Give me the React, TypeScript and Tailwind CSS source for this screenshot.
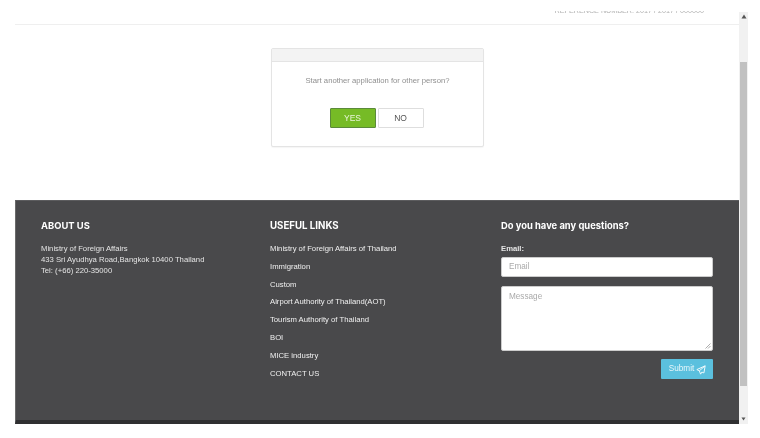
const links = [
  "Ministry of Foreign Affairs of Thailand",
  "Immigration",
  "Custom",
  "Airport Authority of Thailand(AOT)",
  "Tourism Authority of Thailand",
  "BOI",
  "MICE industry",
  "CONTACT US",
];

function Scrollbar() {
  return (
    <div className="w-[9px] mt-[12px] h-[412px] bg-[#f1f1f1] flex flex-col items-center shrink-0">
      <div className="h-[50px] w-full flex flex-col items-center">
        <svg width="6" height="5" viewBox="0 0 6 5" className="mt-[2px]"><path d="M3 0.5 L5.5 4.5 H0.5 Z" fill="#555" /></svg>
      </div>
      <div className="h-[324px] w-[7px] bg-[#c1c1c1]" />
      <div className="flex-1 w-full flex flex-col items-center justify-end pb-[3px]">
        <svg width="5" height="4" viewBox="0 0 6 5"><path d="M3 4.5 L5.5 0.5 H0.5 Z" fill="#555" /></svg>
      </div>
    </div>
  );
}

export default function App() {
  return (
    <div className="w-[760px] h-[438px] bg-white flex overflow-hidden blur-[0.35px] font-['Liberation_Sans',Arial,sans-serif]">
      <div className="w-[15px] shrink-0" />
      <div className="w-[724px] shrink-0 flex flex-col h-[424px]">
        <div className="h-[25px] shrink-0 border-b border-[#efefef] flex justify-end pr-[35px]">
          <div className="mt-[11px] h-[4px] overflow-hidden">
            <div className="-mt-[4px] text-[7.2px] leading-[8px] text-[#b0b0b0] whitespace-nowrap">REFERENCE NUMBER: 2017 / 2017 / 000000</div>
          </div>
        </div>

        <div className="flex-1 flex justify-center items-start pl-[1px]">
          <div className="w-[213px] h-[99px] mt-[23px] border border-[#e4e4e4] rounded-[2px] bg-white flex flex-col shadow-[0_1px_1px_rgba(0,0,0,0.04)]">
            <div className="h-[13px] shrink-0 bg-[#f3f3f3] border-b border-[#e4e4e4]" />
            <p className="text-center text-[7.7px] leading-[12px] text-[#8f8f8f] mt-[13px]">Start another application for other person?</p>
            <div className="flex justify-center gap-[2px] mt-[21px] pr-[2px]">
              <div className="w-[46px] h-[20px] bg-[#76bb26] border border-[#5b8a3a] rounded-[1px] text-[#e8f5d8] text-[8.5px] flex items-center justify-center">YES</div>
              <div className="w-[46px] h-[20px] bg-white border border-[#dedede] rounded-[1px] text-[#555] text-[8.5px] flex items-center justify-center">NO</div>
            </div>
          </div>
        </div>

        <footer className="h-[224px] shrink-0 bg-[#49494b] border-t border-[#5c5c5e] border-b-[4px] border-b-[#2f2f31] border-l border-l-[#6a6a6a] grid grid-cols-[229px_231px_1fr] pl-[25px] pt-[18px]">
          <div>
            <h3 className="font-['Inter',sans-serif] font-bold text-[9.4px] leading-[13px] text-white">ABOUT US</h3>
            <div className="mt-[11px] text-[7.7px] leading-[11px] text-[#e4e4e4]">
              <p>Ministry of Foreign Affairs</p>
              <p>433 Sri Ayudhya Road,Bangkok 10400 Thailand</p>
              <p>Tel: (+66) 220-35000</p>
            </div>
          </div>
          <div>
            <h3 className="font-['Inter',sans-serif] font-bold text-[9.7px] leading-[13px] text-white">USEFUL LINKS</h3>
            <ul className="mt-[11px] flex flex-col gap-[6.8px] text-[7.7px] leading-[11px] text-[#f0f0f0]">
              {links.map((l) => (
                <li key={l}>{l}</li>
              ))}
            </ul>
          </div>
          <div className="w-[212px]">
            <h3 className="font-['Inter',sans-serif] font-bold text-[9.4px] leading-[13px] text-white">Do you have any questions?</h3>
            <label className="block mt-[11px] text-[7.7px] leading-[11px] font-bold text-[#e6e6e6]">Email:</label>
            <div className="mt-[3px] h-[20px] bg-white rounded-[2px] border border-[#cccccc] px-[7px] pt-[1px] flex items-center text-[8.2px] text-[#aaaaaa]">Email</div>
            <div className="relative mt-[9px] h-[65px] bg-white rounded-[2px] border border-[#cccccc] px-[7px] pt-[4px] text-[8.2px] leading-[12px] text-[#aaaaaa]">
              Message
              <svg width="6" height="6" viewBox="0 0 6 6" className="absolute right-[1px] bottom-[1px]"><path d="M5.5 0.5 L0.5 5.5 M5.5 3 L3 5.5" stroke="#888" strokeWidth="0.7" /></svg>
            </div>
            <div className="flex justify-end mt-[8px]">
              <div className="w-[52px] h-[20px] bg-[#5bc0de] rounded-[1px] text-[#e8f7fb] text-[8.2px] pl-[1px] pt-[1px] flex items-center justify-center gap-[2px]">
                Submit
                <svg width="10" height="10" viewBox="0 0 24 24" fill="none" stroke="#eef9fc" strokeWidth="2.4" strokeLinejoin="round"><path d="M22 2 2 11l6 3 3 8 3-5 5 2z" /><path d="M22 2 8 14" /></svg>
              </div>
            </div>
          </div>
        </footer>
      </div>
      <Scrollbar />
    </div>
  );
}
